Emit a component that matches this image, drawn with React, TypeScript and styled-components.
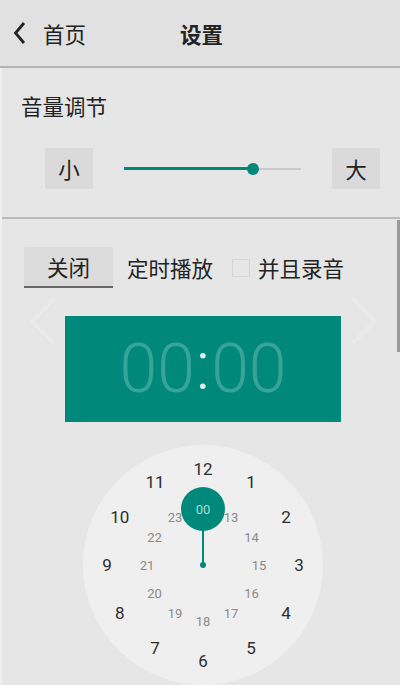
import styled, { createGlobalStyle } from "styled-components";

const GlobalStyle = createGlobalStyle`
  html, body {
    margin: 0;
    padding: 0;
    background: #e6e6e6;
  }
  body {
    font-family: Roboto, "Noto Sans CJK SC", sans-serif;
    color: #222;
  }
`;

const TEAL = "#00897b";
const CJK = `"Noto Sans CJK SC", sans-serif`;

const Page = styled.div`
  position: relative;
  width: 400px;
  height: 685px;
  overflow: hidden;
  background: #e6e6e6;
`;

const Header = styled.div`
  height: 66px;
  display: flex;
  align-items: center;
  background: #e1e1e1;
  border-bottom: 2px solid #b4b4b4;
  font-family: ${CJK};
  font-size: 21.5px;
  color: #222;
`;

const BackButton = styled.div`
  width: 168px;
  display: flex;
  align-items: center;
  gap: 16px;
  padding-left: 12px;
`;

const Title = styled.div`
  font-weight: 700;
`;

const Body = styled.div`
  border-left: 2px solid #efefef;
  height: 617px;
`;

const Section = styled.div<{ divider?: boolean }>`
  padding: 24px 0 28px 0;
  border-bottom: ${(p) => (p.divider ? "2px solid #bcbcbc" : "none")};
`;

const Label = styled.div`
  padding-left: 19px;
  font-family: ${CJK};
  font-size: 21.5px;
  line-height: 28px;
`;

const VolumeRow = styled.div`
  margin-top: 28px;
  display: flex;
  align-items: center;
  padding-left: 43px;
  gap: 31px;
`;

const SizeButton = styled.div`
  width: 48px;
  height: 41px;
  display: flex;
  align-items: center;
  justify-content: center;
  background: #dadada;
  border-radius: 2px;
  font-family: ${CJK};
  font-size: 21.5px;
`;

const Track = styled.div`
  position: relative;
  width: 177px;
  height: 2px;
  background: #c9c9c9;
`;

const Fill = styled.div`
  position: absolute;
  left: 0;
  top: -0.5px;
  height: 3px;
  background: ${TEAL};
`;

const Thumb = styled.div`
  position: absolute;
  top: -5px;
  width: 12px;
  height: 12px;
  margin-left: -6px;
  border-radius: 50%;
  background: ${TEAL};
`;

const TimerSection = styled.div`
  position: relative;
  padding-top: 28px;
`;

const TimerRow = styled.div`
  display: flex;
  align-items: center;
  padding-left: 22px;
  font-family: ${CJK};
  font-size: 21.5px;
`;

const ToggleButton = styled.div`
  width: 89px;
  height: 39px;
  display: flex;
  align-items: center;
  justify-content: center;
  background: #dcdcdc;
  border-radius: 2px 2px 0 0;
  border-bottom: 2px solid #666;
  margin-right: 14px;
`;

const CheckBox = styled.div`
  width: 16px;
  height: 16px;
  border: 1.5px solid #d4d4d4;
  border-radius: 1px;
  margin: 0 8px 0 19px;
`;

const Pager = styled.div`
  display: flex;
  flex-direction: column;
  align-items: center;
  padding-left: 4px;
`;

const TimeBox = styled.div`
  margin-top: 28px;
  width: 276px;
  height: 106px;
  background: ${TEAL};
  display: flex;
  align-items: center;
  justify-content: center;
  font-family: Roboto, sans-serif;
  font-weight: 300;
  font-size: 68px;
  color: rgba(255, 255, 255, 0.22);
`;

const Colon = styled.span`
  color: rgba(255, 255, 255, 0.85);
  margin: 0 1px;
  position: relative;
  top: -3px;
`;

const Arrow = styled.svg<{ side: "left" | "right" }>`
  position: absolute;
  top: 78px;
  ${(p) => (p.side === "left" ? "left: 25px;" : "left: 348px;")}
`;

const Dial = styled.div`
  position: relative;
  margin-top: 23px;
  width: 240px;
  height: 240px;
  border-radius: 50%;
  background: #efefef;
`;

const Num = styled.span<{ inner?: boolean }>`
  position: absolute;
  transform: translate(-50%, -50%);
  font-family: Roboto, sans-serif;
  font-size: ${(p) => (p.inner ? "13px" : "17px")};
  color: ${(p) => (p.inner ? "#8a8a8a" : "#2e2e2e")};
  line-height: 1;
`;

const HandLayer = styled.svg`
  position: absolute;
  left: 0;
  top: 0;
`;

const ScrollThumb = styled.div`
  position: absolute;
  right: 0;
  top: 220px;
  width: 3px;
  height: 132px;
  background: #999;
`;

const outer = [12, 1, 2, 3, 4, 5, 6, 7, 8, 9, 10, 11];
const inner = [13, 14, 15, 16, 17, 18, 19, 20, 21, 22, 23];

const pos = (i: number, r: number) => {
  const a = (i * Math.PI) / 6;
  return { left: 120 + r * Math.sin(a), top: 120 - r * Math.cos(a) };
};

export default function App() {
  const volume = 0.73;
  return (
    <Page>
      <GlobalStyle />
      <Header>
        <BackButton>
          <svg width="15" height="24" viewBox="0 0 15 24">
            <path d="M12 2 L3.5 12 L12 22" fill="none" stroke="#222" strokeWidth="2.8" />
          </svg>
          首页
        </BackButton>
        <Title>设置</Title>
      </Header>
      <Body>
        <Section divider>
          <Label>音量调节</Label>
          <VolumeRow>
            <SizeButton>小</SizeButton>
            <Track>
              <Fill style={{ width: `${volume * 100}%` }} />
              <Thumb style={{ left: `${volume * 100}%` }} />
            </Track>
            <SizeButton>大</SizeButton>
          </VolumeRow>
        </Section>
        <TimerSection>
          <TimerRow>
            <ToggleButton>关闭</ToggleButton>
            定时播放
            <CheckBox />
            并且录音
          </TimerRow>
          <Arrow side="left" width="30" height="48" viewBox="0 0 30 48">
            <path d="M26 3 L5 24 L26 45" fill="none" stroke="#ebebeb" strokeWidth="3.5" strokeLinecap="round" />
          </Arrow>
          <Arrow side="right" width="30" height="48" viewBox="0 0 30 48">
            <path d="M4 3 L25 24 L4 45" fill="none" stroke="#ebebeb" strokeWidth="3.5" strokeLinecap="round" />
          </Arrow>
          <Pager>
            <TimeBox>
              00<Colon>:</Colon>00
            </TimeBox>
            <Dial>
              {outer.map((n, i) => (
                <Num key={n} style={pos(i, 96)}>
                  {n}
                </Num>
              ))}
              {inner.map((n, i) => (
                <Num key={n} inner style={pos(i + 1, 56)}>
                  {n}
                </Num>
              ))}
              <HandLayer width="240" height="240" viewBox="0 0 240 240">
                <line x1="120" y1="120" x2="120" y2="80" stroke={TEAL} strokeWidth="2" />
                <circle cx="120" cy="120" r="3" fill={TEAL} />
                <circle cx="120" cy="64" r="22" fill={TEAL} />
                <text
                  x="120"
                  y="68.5"
                  textAnchor="middle"
                  fontFamily="Roboto, sans-serif"
                  fontSize="13"
                  fill="#a8dcd5"
                >
                  00
                </text>
              </HandLayer>
            </Dial>
          </Pager>
        </TimerSection>
      </Body>
      <ScrollThumb />
    </Page>
  );
}
